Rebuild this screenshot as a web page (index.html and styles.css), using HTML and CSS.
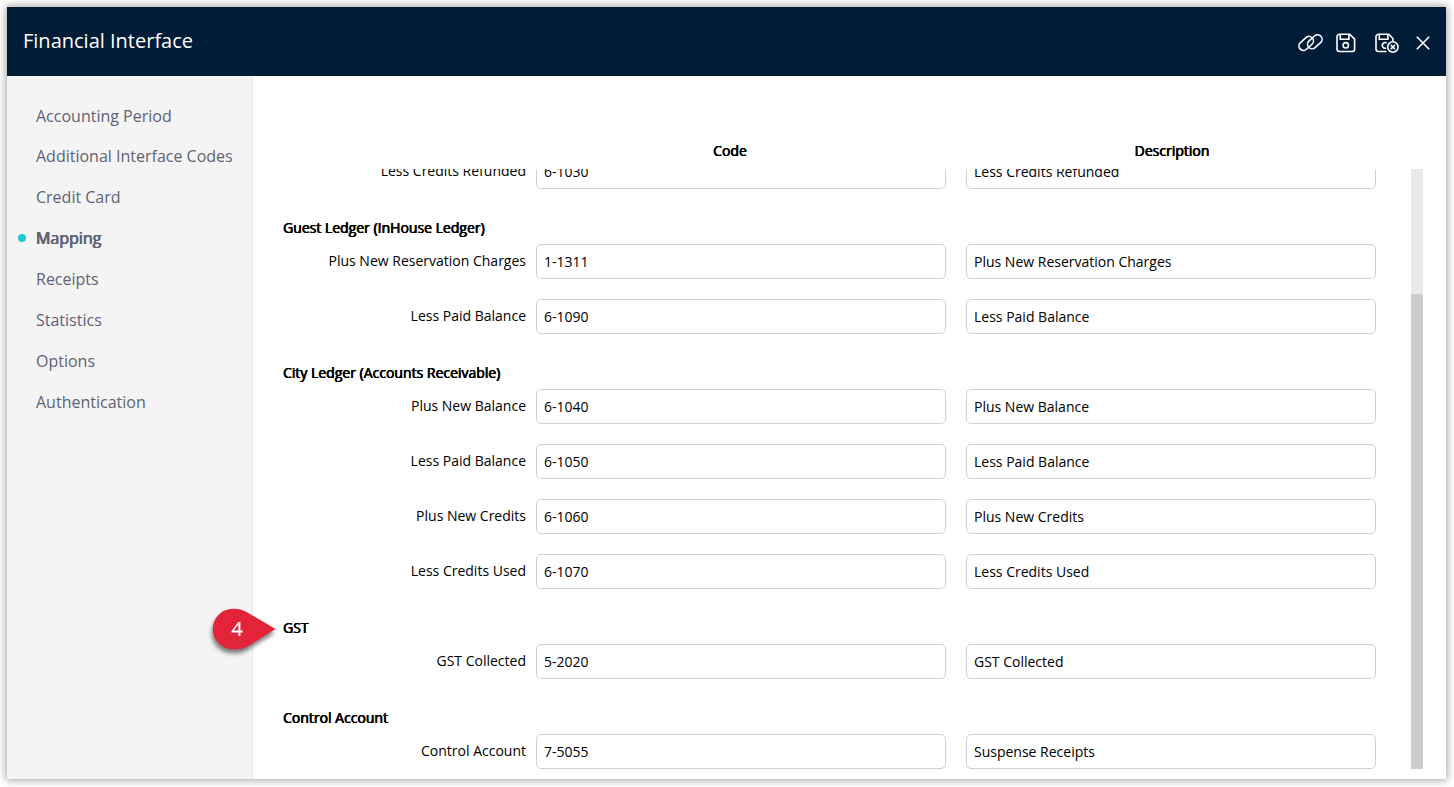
FILE: index.html
```html
<!DOCTYPE html>
<html lang="en">
<head>
	<meta charset="UTF-8">
	<title>Financial Interface</title>
	<link rel="stylesheet" href="styles.css">
</head>
<body>
<div class="window">
	<header class="topbar">
		<h1>Financial Interface</h1>
		<div class="tools">
			<svg class="icon-link" width="26" height="20" viewBox="0 0 26 20">
				<rect x="-8.2" y="-4.5" width="16.4" height="9" rx="4.5" transform="translate(8.2 10.4) rotate(-42)"/>
				<rect x="-8.2" y="-4.5" width="16.4" height="9" rx="4.5" transform="translate(16.8 8.8) rotate(-42)"/>
			</svg>
			<svg class="icon-save" width="20" height="20" viewBox="0 0 20 20">
				<path d="M3.5 1.3h10.2l4.9 4.9v9.8a2.5 2.5 0 0 1-2.5 2.5H3.5A2.5 2.5 0 0 1 1 16V3.8a2.5 2.5 0 0 1 2.5-2.5z"/>
				<path d="M4.3 1.5v4.7h8.6V1.5"/>
				<circle cx="9.8" cy="12.3" r="2.7"/>
			</svg>
			<svg class="icon-exit" width="25" height="20" viewBox="0 0 25 20">
				<path d="M11.5 18.5h-8A2.5 2.5 0 0 1 1 16V3.8a2.5 2.5 0 0 1 2.5-2.5h10.2l4.2 4.2v2.4"/>
				<path d="M4.3 1.5v4.7h8.6V1.5"/>
				<path d="M11.8 10.2a2.8 2.8 0 1 0-.6 4.8"/>
				<circle cx="17.9" cy="14" r="5.2"/>
				<path d="M15.8 11.9l4.2 4.2M20 11.9l-4.2 4.2"/>
			</svg>
			<svg class="icon-close" width="14" height="14" viewBox="0 0 14 14">
				<path d="M.8.8l12.4 12.4M13.2.8L.8 13.2"/>
			</svg>
		</div>
	</header>
	<div class="main">
		<nav class="sidebar">
			<a>Accounting Period</a>
			<a>Additional Interface Codes</a>
			<a>Credit Card</a>
			<a class="active">Mapping</a>
			<a>Receipts</a>
			<a>Statistics</a>
			<a>Options</a>
			<a>Authentication</a>
			<!-- step marker, points at the GST group -->
			<svg class="marker" width="76" height="56" viewBox="0 0 76 56">
				<path d="M70.5 24 43 41.2C38 44 33 44.5 28 44.2A20.2 20.2 0 0 1 28 3.8c5-.2 9.5 1 14 3.4z"/>
				<text x="32" y="31">4</text>
			</svg>
		</nav>
		<section class="content">
			<div class="columns">
				<span></span>
				<b>Code</b>
				<b>Description</b>
			</div>
			<div class="scroller">
				<form class="rows">
					<div class="row"><label>Less Credits Refunded</label><input type="text" value="6-1030"><input type="text" value="Less Credits Refunded"></div>
					<h2>Guest Ledger (InHouse Ledger)</h2>
					<div class="row"><label>Plus New Reservation Charges</label><input type="text" value="1-1311"><input type="text" value="Plus New Reservation Charges"></div>
					<div class="row"><label>Less Paid Balance</label><input type="text" value="6-1090"><input type="text" value="Less Paid Balance"></div>
					<h2>City Ledger (Accounts Receivable)</h2>
					<div class="row"><label>Plus New Balance</label><input type="text" value="6-1040"><input type="text" value="Plus New Balance"></div>
					<div class="row"><label>Less Paid Balance</label><input type="text" value="6-1050"><input type="text" value="Less Paid Balance"></div>
					<div class="row"><label>Plus New Credits</label><input type="text" value="6-1060"><input type="text" value="Plus New Credits"></div>
					<div class="row"><label>Less Credits Used</label><input type="text" value="6-1070"><input type="text" value="Less Credits Used"></div>
					<h2>GST</h2>
					<div class="row"><label>GST Collected</label><input type="text" value="5-2020"><input type="text" value="GST Collected"></div>
					<h2>Control Account</h2>
					<div class="row"><label>Control Account</label><input type="text" value="7-5055"><input type="text" value="Suspense Receipts"></div>
				</form>
				<div class="track"><div class="thumb"></div></div>
			</div>
		</section>
	</div>
</div>
</body>
</html>
```
FILE: styles.css
```css
* {
	box-sizing: border-box;
}
body {
	margin: 0;
	padding: 7px 8px 8px 7px;
	height: 787px;
	overflow: hidden;
	background: #fff;
	font-family: "Open Sans", sans-serif;
	font-size: 14px;
	color: #000;
}
.window {
	display: flex;
	flex-direction: column;
	height: 772px;
	background: #fff;
	box-shadow: 0 0 8px 1px rgba(0, 0, 0, .38);
}
.topbar {
	display: flex;
	justify-content: space-between;
	height: 69px;
	padding: 0 16px;
	background: #001c36;
	color: #fff;
}
.topbar h1 {
	margin: 0;
	font-size: 20px;
	font-weight: 400;
	line-height: 68px;
}
.tools {
	display: flex;
	align-items: center;
	padding-top: 2px;
}
.tools svg {
	fill: none;
	stroke: #fff;
	stroke-width: 1.6;
}
.icon-save {
	margin-left: 12px;
}
.icon-exit {
	margin-left: 19px;
}
.icon-close {
	margin-left: 16px;
}
.main {
	display: flex;
	flex: 1;
}
.sidebar {
	position: relative;
	display: flex;
	flex-direction: column;
	width: 246px;
	padding-top: 20px;
	border-right: 1px solid #e8e8e8;
	background: #f4f4f4;
}
.sidebar a {
	height: 41px;
	padding-left: 29px;
	line-height: 41px;
	font-size: 16px;
	color: #5f6373;
}
.sidebar a:first-child {
	height: 40px;
}
.sidebar .active {
	display: flex;
	align-items: center;
	padding-left: 11px;
	text-shadow: -.4px 0 #5f6373, .4px 0 #5f6373;
}
.active::before {
	content: "";
	width: 8px;
	height: 8px;
	margin: 0 10px 1px 0;
	border-radius: 50%;
	background: #1fccd6;
}
.marker {
	position: absolute;
	left: 198px;
	top: 529px;
	overflow: visible;
	filter: drop-shadow(-1px 4px 2px rgba(0, 0, 0, .5));
	fill: #e32338;
}
.marker text {
	fill: #fff;
	stroke: #fff;
	stroke-width: .2px;
	font-size: 20px;
	text-anchor: middle;
}
.content {
	flex: 1;
	padding: 62px 23px 10px 30px;
}
.columns {
	display: grid;
	grid-template-columns: 243px 410px 410px;
	column-gap: 10px;
	height: 31px;
	line-height: 26px;
}
.columns b {
	padding-right: 22px;
	font-weight: 400;
	text-align: center;
	text-shadow: -.3px 0 #000, .4px 0 #000;
}
.columns b:last-child {
	padding: 0 0 0 22px;
}
.scroller {
	display: flex;
	justify-content: space-between;
	height: 600px;
	overflow: hidden;
}
.rows {
	margin-top: -15px;
}
.rows h2 {
	height: 35px;
	margin: 0;
	padding-top: 9px;
	font-size: 14px;
	font-weight: 400;
	line-height: 20px;
	text-shadow: -.3px 0 #000, .4px 0 #000;
}
.row {
	display: flex;
	height: 35px;
	margin-bottom: 20px;
}
.row label {
	width: 243px;
	margin-right: 10px;
	line-height: 34px;
	text-align: right;
}
.row input {
	width: 410px;
	height: 35px;
	padding: 1px 7px;
	border: 1px solid #d0d0d0;
	border-radius: 5px;
	outline: none;
	background: #fff;
	font: inherit;
	color: #000;
}
.row input + input {
	margin-left: 20px;
}
.track {
	width: 12px;
	padding-top: 125px;
	background: #e9e9e9;
}
.thumb {
	height: 475px;
	background: #cdcdcd;
}
```
